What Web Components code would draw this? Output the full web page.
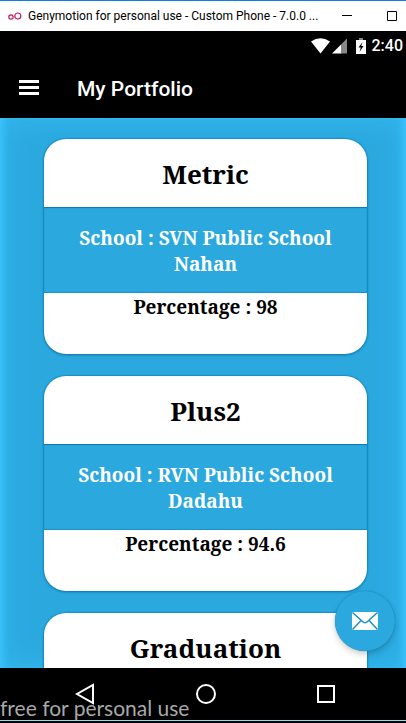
<!DOCTYPE html>
<html lang="en">
<head>
<meta charset="utf-8">
<meta name="viewport" content="width=device-width, initial-scale=1">
<title>My Portfolio</title>
<style>
html, body { margin: 0; height: 100%; }
body { background: #000; font-family: Roboto, "Noto Sans", sans-serif; overflow: hidden; }
</style>
</head>
<body>
<phone-window>
  <window-title slot="title">Genymotion for personal use - Custom Phone - 7.0.0 ...</window-title>
  <status-bar slot="status">2:40</status-bar>
  <app-bar slot="bar">My Portfolio</app-bar>
  <education-card><span slot="name">Metric</span><span slot="school">School : SVN Public School Nahan</span><span slot="score">Percentage : 98</span></education-card>
  <education-card><span slot="name">Plus2</span><span slot="school">School : RVN Public School Dadahu</span><span slot="score">Percentage : 94.6</span></education-card>
  <education-card><span slot="name">Graduation</span></education-card>
  <mail-button slot="action"></mail-button>
  <nav-bar slot="nav">free for personal use</nav-bar>
</phone-window>
<script>
const define = (name, html) => {
  customElements.define(name, class extends HTMLElement {
    constructor() {
      super();
      this.attachShadow({ mode: 'open' }).innerHTML = html;
    }
  });
};

define('phone-window', `
<style>
:host { display: flex; flex-direction: column; height: 100vh; }
.stage { position: relative; flex: 1; min-height: 0; display: flex; }
main {
  flex: 1; min-width: 0; overflow: hidden;
  display: flex; flex-direction: column; gap: 22px;
  padding: 21px 39px 0 44px;
  background: #2ba9df;
  box-shadow: inset 7px 0 7px -4px #3cc4ff, inset -7px 0 7px -4px #3cc4ff,
    inset 0 0 28px 2px #34b8ef;
}
</style>
<slot name="title"></slot>
<slot name="status"></slot>
<slot name="bar"></slot>
<div class="stage"><main><slot></slot></main><slot name="action"></slot></div>
<slot name="nav"></slot>`);

define('window-title', `
<style>
:host {
  display: flex; align-items: center; box-sizing: border-box; height: 31px;
  padding: 0 9px 0 8px; border-top: 1px solid #0f7fe5; background: #fff; color: #000;
  font: 12px/16px Roboto, "Noto Sans", sans-serif;
}
.text { flex: 1; margin-left: 6px; white-space: nowrap; overflow: hidden; }
button { display: flex; padding: 0; border: 0; background: none; margin-left: 35px; }
svg { display: block; flex: none; }
.text + button { margin-left: 0; }
</style>
<svg width="14" height="10" viewBox="0 0 14 10" fill="none" stroke="#c2185b" stroke-width="1.2"><circle cx="3" cy="6" r="2.2"/><circle cx="9.8" cy="5" r="3"/></svg>
<span class="text"><slot></slot></span>
<button aria-label="Minimize"><svg width="10" height="10" stroke="#000"><path d="M0 4.500H10"/></svg></button>
<button aria-label="Maximize"><svg width="10" height="10" fill="none" stroke="#000"><path d="M.5.5h9v9h-9z"/></svg></button>`);

define('status-bar', `
<style>
:host {
  display: flex; align-items: center; justify-content: flex-end; height: 29px;
  padding: 0 3px; background: #000; color: #fff; font-weight: 500; font-size: 16px; line-height: 20px;
}
svg { display: block; margin-right: 6px; }
</style>
<svg width="55" height="16" viewBox="0 0 55 16" aria-hidden="true">
  <path fill="#fff" d="M0 3.500Q9.500-3 19 3.500L9.500 15.500z"/>
  <path fill="#fff" d="M21 15.500 30.500 6v9.500z"/><path fill="#888" d="M30.500 6 36 .5v15h-5.500z"/>
  <path fill="#888" d="M48 0h4v2h-4z"/><path fill="#fff" d="M45 2h10v14H45z"/><path d="M51.500 4 47.500 9.500h2.300L48.500 14l4-6h-2.300z"/>
</svg>
<slot></slot>`);

define('app-bar', `
<style>
:host { display: flex; align-items: center; height: 58px; padding: 0 19px; background: #000; color: #fff; }
button { display: flex; flex-direction: column; gap: 3px; padding: 0 0 4px; border: 0; background: none; }
i { width: 20px; height: 3px; background: #fff; }
h1 { margin: 0 0 0 38px; font-size: 21px; line-height: 28px; font-weight: 500; }
</style>
<button aria-label="Open menu"><i></i><i></i><i></i></button>
<h1><slot></slot></h1>`);

define('education-card', `
<style>
:host {
  display: block; flex: none; border-radius: 22px; overflow: hidden; background: #fff; color: #000;
  box-shadow: 0 0 1px 1px #0878b066, 0 1px 3px #00507a88;
  font-family: "Noto Serif", "Droid Serif", "DejaVu Serif Condensed", "DejaVu Serif", serif;
  font-weight: 700; text-align: center;
}
h2 { margin: 0; padding: 18px 8px 16px; font-size: 26px; line-height: 34px; }
.school {
  margin: 0; padding: 18px 20px 16px; background: #2ba9df; color: #fff;
  font-size: 19px; line-height: 26px; box-shadow: inset 0 1px 1px #0878b0, inset 0 -1px 1px #1b8fc6;
}
.score { margin: 0; min-height: 46px; padding-bottom: 15px; font-size: 19px; line-height: 28px; }
</style>
<h2><slot name="name"></slot></h2>
<p class="school"><slot name="school"></slot></p>
<p class="score"><slot name="score"></slot></p>`);

define('mail-button', `
<style>
:host { position: absolute; right: 11px; bottom: 17px; }
button {
  display: grid; place-items: center; width: 60px; height: 60px; padding: 0; border: 0;
  border-radius: 50%; background: #2ba9df; box-shadow: 0 3px 6px #0003, 0 0 1px #0878b0;
}
</style>
<button aria-label="Send mail"><svg width="28" height="20" viewBox="0 0 28 20">
  <rect x="1" y="1" width="26" height="18" rx="1" fill="#fff"/>
  <path d="M1.500 1.500 11.500 10.500Q14 13 16.500 10.500L26.500 1.500M1.500 18.500 10 9.500M26.500 18.500 18 9.500" fill="none" stroke="#1b8fc6" stroke-width="1.500"/>
</svg></button>`);

define('nav-bar', `
<style>
:host { display: block; position: relative; background: #000; border-bottom: 2px solid #000; color: #a8a8a8; }
nav {
  display: flex; justify-content: center; align-items: flex-start; gap: 98px;
  box-sizing: border-box; height: 53px; padding: 15px 0 0 5px;
  border-bottom: 1px solid #8adfee;
}
button { display: block; padding: 0; border: 0; background: none; }
svg { display: block; }
.mark { position: absolute; left: 0; bottom: 0; font: 21px/26px Lato, sans-serif; }
</style>
<nav>
  <button aria-label="Back"><svg width="22" height="22" fill="none" stroke="#fff" stroke-width="2"><path d="M18 2v18L2 11z"/></svg></button>
  <button aria-label="Home"><svg width="22" height="22" fill="none" stroke="#fff" stroke-width="2"><circle cx="11" cy="11" r="9"/></svg></button>
  <button aria-label="Recent apps"><svg width="22" height="22" fill="none" stroke="#fff" stroke-width="2"><path d="M3 3h16v16H3z"/></svg></button>
</nav>
<span class="mark"><slot></slot></span>`);
</script>
</body>
</html>
